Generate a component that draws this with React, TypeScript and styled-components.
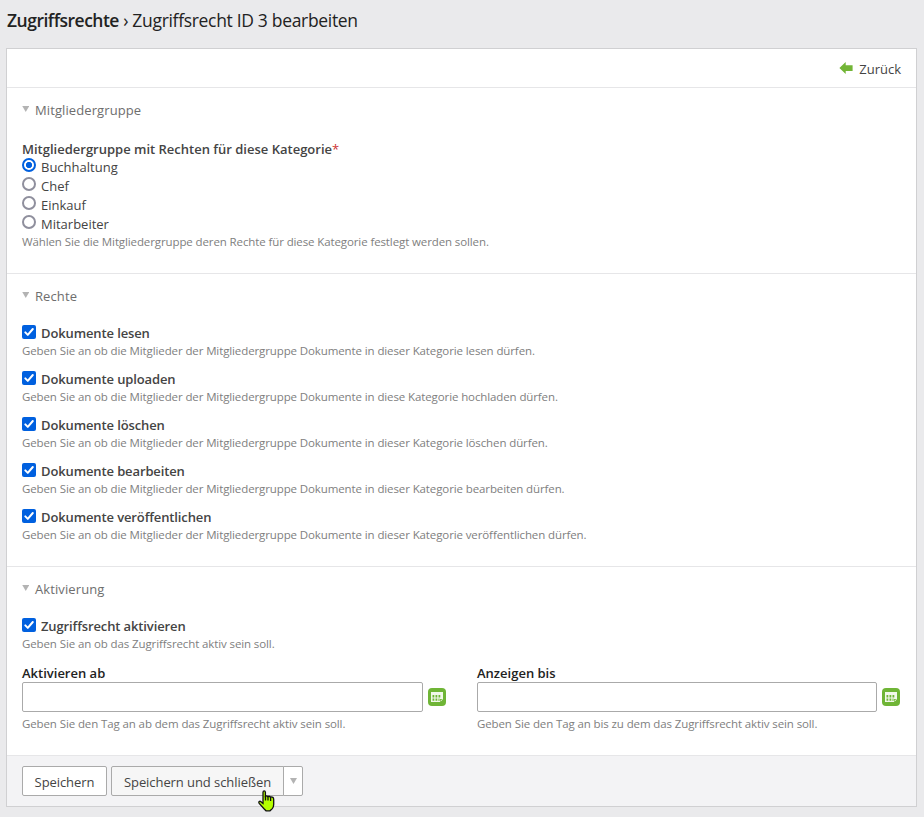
import React, { useState } from "react";
import styled, { createGlobalStyle, css } from "styled-components";

const GlobalStyle = createGlobalStyle`
  *, *::before, *::after { box-sizing: border-box; }
  body {
    margin: 0;
    background: #eaeaec;
    color: #444;
    font-family: "Segoe UI", "Open Sans", "Noto Sans", sans-serif;
    font-size: 13px;
  }
  button, input { font: inherit; color: inherit; }
`;

const Page = styled.main`
  position: relative;
  width: 924px;
  height: 817px;
  padding: 0 7px 0 6px;
  overflow: hidden;
`;

const Title = styled.h1`
  height: 33px;
  margin: 0 0 15px;
  padding: 7px 0 0 1px;
  color: #222;
  font-size: 17.5px;
  font-weight: 400;
  line-height: 26px;
  letter-spacing: -0.32px;
  white-space: nowrap;
`;

const TitleArea = styled.span`
  font-weight: 600;
  letter-spacing: -0.5px;
`;

const Panel = styled.div`
  width: 911px;
  border: 1px solid #d0d0d2;
  background: #fff;
`;

const Toolbar = styled.nav`
  display: flex;
  justify-content: flex-end;
  align-items: center;
  height: 39px;
  padding: 2px 15px 0 0;
  border-bottom: 1px solid #e6e6e8;
`;

const BackLink = styled.a`
  display: flex;
  align-items: center;
  gap: 6px;
  line-height: 20px;
  color: #444;
  svg { margin-top: -3px; }
`;

const Section = styled.section`
  padding: 12px 15px 23px;
  border-bottom: 1px solid #e6e6e8;
`;

const Legend = styled.h2<{ $gap: number }>`
  display: flex;
  align-items: center;
  gap: 6px;
  height: 20px;
  margin: 0 0 ${(p) => p.$gap}px;
  color: #6e6e6e;
  font-size: 13px;
  font-weight: 400;
  line-height: 20px;
  letter-spacing: 0.1px;
  svg { margin: -3px 0 0 -0.5px; width: 7.5px; }
`;

const FieldLabel = styled.div<{ $dark?: boolean }>`
  height: 18px;
  font-weight: 600;
  line-height: 18px;
  color: ${(p) => (p.$dark ? "#222" : "#444")};
`;

const Mandatory = styled.span`
  color: #c33;
  font-weight: 400;
`;

const optionBase = css`
  display: flex;
  align-items: flex-start;
  gap: 5px;
  line-height: 18px;
`;

const RadioRow = styled.label`
  ${optionBase}
  height: 19px;
  &:last-child { height: 18px; }
`;

const Radio = styled.input`
  appearance: none;
  flex: none;
  width: 14px;
  height: 14px;
  margin: 0;
  border: 2px solid #8f8f9d;
  border-radius: 50%;
  background: #fff;
  &:checked {
    border-color: #0060df;
    background: radial-gradient(circle, #0060df 2.8px, #fff 3.4px);
  }
`;

const CheckRow = styled.label`
  ${optionBase}
  height: 18px;
  font-weight: 600;
  letter-spacing: -0.12px;
`;

const CheckBox = styled.span`
  display: flex;
  flex: none;
  width: 14px;
  height: 14px;
  margin-top: 1px;
  border-radius: 2px;
  background: #0060df;
`;

const HiddenInput = styled.input`
  display: none;
  &:not(:checked) + ${CheckBox} {
    border: 2px solid #8f8f9d;
    background: #fff;
  }
`;

const Help = styled.p<{ $top?: number }>`
  height: 17px;
  margin: ${(p) => p.$top ?? 0}px 0 0;
  color: #808080;
  font-size: 11.5px;
  line-height: 17px;
  letter-spacing: -0.11px;
  white-space: nowrap;
`;

const CheckList = styled.div`
  display: grid;
  row-gap: 11px;
`;

const DateColumns = styled.div`
  display: grid;
  grid-template-columns: 424px 423px;
  column-gap: 31px;
  margin-top: 12px;
`;

const DateRow = styled.div`
  display: flex;
  align-items: center;
  justify-content: space-between;
`;

const DateInput = styled.input<{ $width: number }>`
  width: ${(p) => p.$width}px;
  height: 30px;
  padding: 0 6px;
  border: 1px solid #aaa;
  border-radius: 2px;
  background: #fff;
`;

const Footer = styled.footer`
  display: flex;
  gap: 4px;
  padding: 10px 15px;
  background: #f3f3f5;
`;

const Button = styled.button<{ $width: number; $hover?: boolean }>`
  width: ${(p) => p.$width}px;
  height: 30px;
  padding: 1px 0 0;
  border: 1px solid #aaa;
  border-radius: 2px;
  background: ${(p) => (p.$hover ? "#f6f6f6" : "#fff")};
  line-height: 20px;
  letter-spacing: -0.07px;
  white-space: nowrap;
`;

const MenuButton = styled(Button)`
  display: flex;
  align-items: center;
  justify-content: center;
  padding: 0;
`;

const SplitButton = styled.div`
  display: flex;
  ${Button}:first-child { border-radius: 2px 0 0 2px; }
  ${MenuButton} { margin-left: -1px; border-radius: 0 2px 2px 0; }
`;

const Pointer = styled.svg`
  position: absolute;
  left: 258px;
  top: 790px;
`;

const Triangle = () => (
  <svg width="7" height="6" viewBox="0 0 7 6">
    <path d="M0 0h7L3.5 6z" fill="#b3b3b3" />
  </svg>
);

const BackArrow = () => (
  <svg width="14" height="12" viewBox="0 0 14 12">
    <path d="M0.4 6 6.7 0v3.2H13.6v5.7H6.7V12z" fill="#72b536" />
  </svg>
);

const CheckMark = () => (
  <svg width="14" height="14" viewBox="0 0 14 14">
    <path d="M3.3 7.4 5.8 9.9 10.8 4" fill="none" stroke="#fff" strokeWidth="2" strokeLinecap="round" strokeLinejoin="round" />
  </svg>
);

const CalendarIcon = () => (
  <svg width="18" height="18" viewBox="0 0 18 18">
    <rect width="18" height="18" rx="4" fill="#6fb536" />
    <path d="M3 4h12v7.2L12.3 14H3z" fill="#f1f8ea" />
    <path d="M4.5 7h1.8v2.4H4.5zM7.5 7h1.8v2.4H7.5zM10.5 7h1.8v2.4h-1.8zM4.5 10.4h1.8v2.4H4.5zM7.5 10.4h1.8v2.4H7.5zM10.5 10.4h1v2.6h-1zM12 11h2.6v.7H12.7v2.2H12z" fill="#6fb536" />
  </svg>
);

const HandPointer = () => (
  <Pointer width="17" height="22" viewBox="0 0 17 22">
    <path
      d="M5 2.2Q5.1.9 6.2.9T7.4 2.2V6.2Q8.8 5.3 9.8 6.6 11.2 5.7 12.4 7 15.7 6.5 15.7 9.5V14.5Q15.6 17 14.3 18.6L12 20.8H8L6 18.8L1.2 13.4Q.3 11.7 1.5 11.3 2.8 11 3.8 12.5L5 13.4z"
      fill="#b5ff00"
      stroke="#111"
      strokeWidth="1.3"
    />
    <path d="M7.5 6v4.5M10 6.5v4M12.6 7v4" stroke="#111" strokeWidth="1.3" />
  </Pointer>
);

const groups = ["Buchhaltung", "Chef", "Einkauf", "Mitarbeiter"];

const rights = [
  ["Dokumente lesen", "Geben Sie an ob die Mitglieder der Mitgliedergruppe Dokumente in dieser Kategorie lesen dürfen."],
  ["Dokumente uploaden", "Geben Sie an ob die Mitglieder der Mitgliedergruppe Dokumente in diese Kategorie hochladen dürfen."],
  ["Dokumente löschen", "Geben Sie an ob die Mitglieder der Mitgliedergruppe Dokumente in dieser Kategorie löschen dürfen."],
  ["Dokumente bearbeiten", "Geben Sie an ob die Mitglieder der Mitgliedergruppe Dokumente in dieser Kategorie bearbeiten dürfen."],
  ["Dokumente veröffentlichen", "Geben Sie an ob die Mitglieder der Mitgliedergruppe Dokumente in dieser Kategorie veröffentlichen dürfen."],
];

function CheckField({ label, help }: { label: string; help: string }) {
  return (
    <div>
      <CheckRow>
        <HiddenInput type="checkbox" defaultChecked />
        <CheckBox><CheckMark /></CheckBox>
        {label}
      </CheckRow>
      <Help>{help}</Help>
    </div>
  );
}

function DateField({ label, help, width }: { label: string; help: string; width: number }) {
  return (
    <div>
      <FieldLabel $dark>{label}</FieldLabel>
      <DateRow>
        <DateInput $width={width} aria-label={label} />
        <CalendarIcon />
      </DateRow>
      <Help $top={3}>{help}</Help>
    </div>
  );
}

export default function App() {
  const [group, setGroup] = useState(groups[0]);
  return (
    <>
      <GlobalStyle />
      <Page>
        <Title>
          <TitleArea>Zugriffsrechte</TitleArea> › Zugriffsrecht ID 3 bearbeiten
        </Title>
        <Panel>
          <Toolbar>
            <BackLink><BackArrow />Zurück</BackLink>
          </Toolbar>
          <Section>
            <Legend $gap={20}><Triangle />Mitgliedergruppe</Legend>
            <FieldLabel>Mitgliedergruppe mit Rechten für diese Kategorie<Mandatory>*</Mandatory></FieldLabel>
            <div>
              {groups.map((name) => (
                <RadioRow key={name}>
                  <Radio type="radio" name="group" checked={group === name} onChange={() => setGroup(name)} />
                  {name}
                </RadioRow>
              ))}
            </div>
            <Help>Wählen Sie die Mitgliedergruppe deren Rechte für diese Kategorie festlegt werden sollen.</Help>
          </Section>
          <Section>
            <Legend $gap={18}><Triangle />Rechte</Legend>
            <CheckList>
              {rights.map(([label, help]) => <CheckField key={label} label={label} help={help} />)}
            </CheckList>
          </Section>
          <Section>
            <Legend $gap={18}><Triangle />Aktivierung</Legend>
            <CheckField label="Zugriffsrecht aktivieren" help="Geben Sie an ob das Zugriffsrecht aktiv sein soll." />
            <DateColumns>
              <DateField label="Aktivieren ab" help="Geben Sie den Tag an ab dem das Zugriffsrecht aktiv sein soll." width={401} />
              <DateField label="Anzeigen bis" help="Geben Sie den Tag an bis zu dem das Zugriffsrecht aktiv sein soll." width={400} />
            </DateColumns>
          </Section>
          <Footer>
            <Button $width={85}>Speichern</Button>
            <SplitButton>
              <Button $width={173} $hover>Speichern und schließen</Button>
              <MenuButton $width={20} aria-label="Weitere Optionen"><Triangle /></MenuButton>
            </SplitButton>
          </Footer>
        </Panel>
        <HandPointer />
      </Page>
    </>
  );
}
